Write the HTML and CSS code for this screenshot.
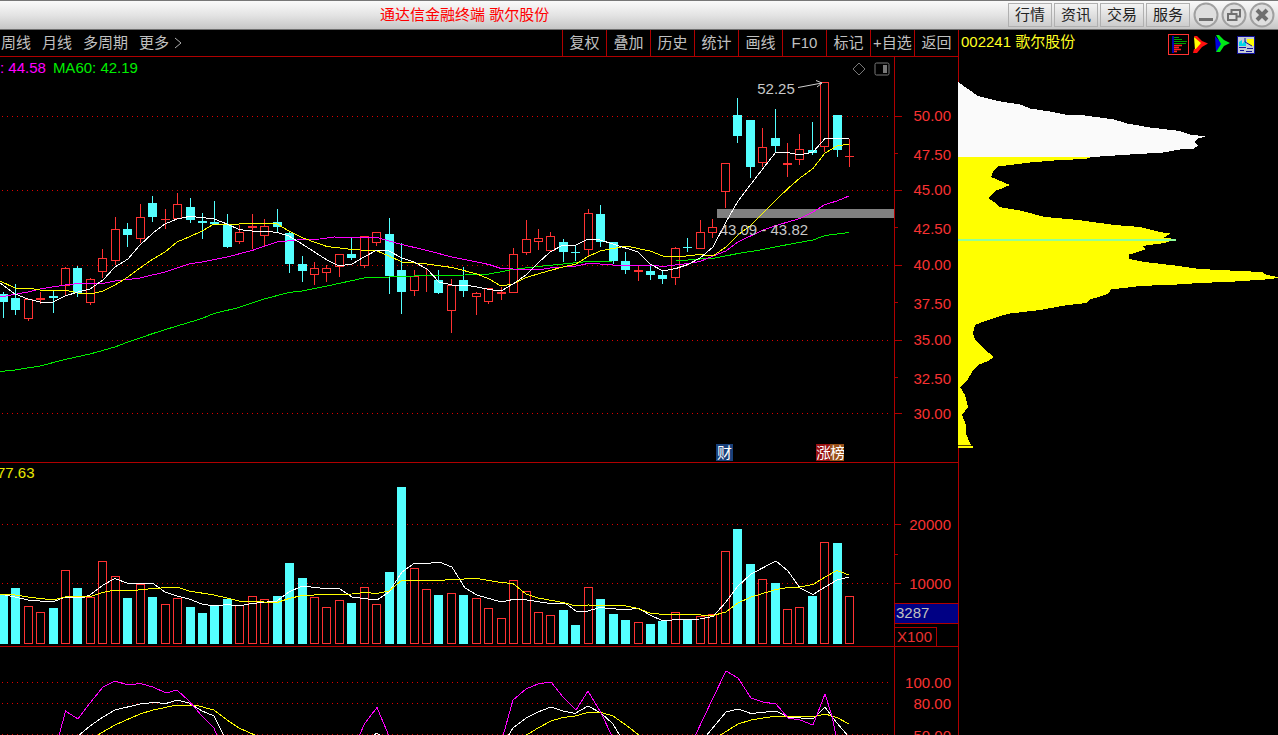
FILE: index.html
```html
<!DOCTYPE html>
<html lang="zh-CN">
<head>
<meta charset="utf-8">
<title>通达信金融终端 歌尔股份</title>
<link rel="stylesheet" href="styles.css">
</head>
<body>
<div class="app">
  <header class="titlebar">
    <h1 class="title">通达信金融终端 歌尔股份</h1>
    <nav class="title-menu">
      <button class="menu-btn" type="button">行情</button>
      <button class="menu-btn" type="button">资讯</button>
      <button class="menu-btn" type="button">交易</button>
      <button class="menu-btn" type="button">服务</button>
    </nav>
    <div class="window-controls">
      <button class="win-btn" type="button" aria-label="最小化"><svg viewBox="0 0 26 26"><circle cx="13" cy="13" r="11.5"/><path class="thick" d="M6 17.500H20"/></svg></button>
      <button class="win-btn" type="button" aria-label="还原"><svg viewBox="0 0 26 26"><circle cx="13" cy="13" r="11.5"/><path class="mid" d="M10.500 12V8H19V14.500H15.500M7 12H15.500V18H7Z"/></svg></button>
      <button class="win-btn" type="button" aria-label="关闭"><svg viewBox="0 0 26 26"><circle cx="13" cy="13" r="11.5"/><path class="cross" d="M8 8L18 18M18 8L8 18"/></svg></button>
    </div>
  </header>

  <main class="workspace">
    <section class="left">
      <div class="toolbar">
        <div class="periods">
          <button type="button">周线</button>
          <button type="button">月线</button>
          <button type="button">多周期</button>
          <button type="button" class="more">更多<svg viewBox="0 0 8 12"><path d="M1 1L7 6L1 11"/></svg></button>
        </div>
        <div class="tools">
          <button type="button">复权</button>
          <button type="button">叠加</button>
          <button type="button">历史</button>
          <button type="button">统计</button>
          <button type="button">画线</button>
          <button type="button">F10</button>
          <button type="button">标记</button>
          <button type="button">+自选</button>
          <button type="button">返回</button>
        </div>
      </div>

      <div class="panes">
        <div class="pane">
          <div class="plot">
            <svg id="price" class="canvas" viewBox="0 57 894 405" preserveAspectRatio="none"></svg>
            <p class="legend"><span class="ma20">: 44.58</span><span class="ma60">MA60: 42.19</span></p>
            <div class="plot-icons">
              <svg class="diamond" viewBox="0 0 14 14"><path d="M7 1L13 7L7 13L1 7Z"/></svg>
              <svg class="side" viewBox="0 0 16 14"><rect x="1" y="1" width="14" height="12" rx="1.500"/><path class="fill" d="M9 3H13V11H9Z"/></svg>
            </div>
            <svg id="notes" class="canvas"></svg>
            <div class="badge badge-fin">财</div>
            <div class="badge-pair"><span class="badge-up">涨</span><span class="badge-rank">榜</span></div>
          </div>
          <svg id="priceAxis" class="axis"></svg>
        </div>
        <div class="pane">
          <div class="plot">
            <svg id="volume" class="canvas" viewBox="0 463 894 183" preserveAspectRatio="none"></svg>
            <p class="legend clipped"><span class="vol">77.63</span></p>
          </div>
          <div class="axis-cell">
            <svg id="volumeAxis" class="axis"></svg>
            <div class="axis-foot">
              <div class="current">3287</div>
              <div class="unit">X100</div>
            </div>
          </div>
        </div>
        <div class="pane last">
          <div class="plot">
            <svg id="kdj" class="canvas" viewBox="0 647 894 88" preserveAspectRatio="none"></svg>
          </div>
          <svg id="kdjAxis" class="axis"></svg>
        </div>
      </div>
    </section>

    <aside class="right">
      <div class="stock-head">
        <h2 class="stock">002241 歌尔股份</h2>
        <div class="stock-icons">
          <button type="button" aria-label="筹码分布"><svg width="21" height="21" viewBox="0 0 21 21"><rect x=".5" y=".5" width="20" height="20" fill="none" stroke="#ff3232"/><path d="M5 2V19" stroke="#0000b0" stroke-width="2"/><path d="M6 3.500H11M6 5.500H14M6 7.500H19M6 9.500H18" stroke="#00a000"/><path d="M6 11.500H14M6 13.500H11M6 15.500H13M6 17.500H9" stroke="#ff2020" stroke-width="1.500"/></svg></button>
          <button type="button" aria-label="火焰山"><svg width="15" height="19" viewBox="0 0 15 19"><path d="M1 1L4 1L9 6L15 8.500L9 12L4 18H1L5 9Z" fill="#ff1010"/><path d="M1 2L8 8L2 15Z" fill="#ffff00"/><path d="M1 14L6 14L2 18H0Z" fill="#ff1010"/></svg></button>
          <button type="button" aria-label="活跃度"><svg width="15" height="19" viewBox="0 0 15 19"><path d="M0 1L7 9L1 17Z" fill="#0000e0"/><path d="M1 0H4L9 5L15 8L9 11L5 17H1L6 9Z" fill="#00e818"/></svg></button>
          <button type="button" aria-label="成本信息"><svg width="18" height="18" viewBox="0 0 18 18"><path d="M0 0H18V18H0Z" fill="#10109a"/><path d="M1 1H17V17H1Z" fill="#c4ccd4"/><path d="M10 3H17V10H14L10 6Z" fill="#ffff00"/><path d="M2 10V6L5 4V8L9 4V10Z" fill="#00d8e8"/><path d="M8 2V6L15 10" stroke="#10109a" fill="none"/><path d="M2 11.500H9M3 14.500H7M10 12.500H16M9 15.500H15" stroke="#10109a"/></svg></button>
        </div>
      </div>
      <svg id="chips" class="chips" viewBox="958 57 320 678" preserveAspectRatio="none"></svg>
    </aside>
  </main>
</div>
<script src="charts.js"></script>
</body>
</html>
```

FILE: styles.css
```css
* { box-sizing: border-box; }

body {
  margin: 0;
  background: #000;
  color: #c0c0c0;
  font: 15px/20px "Liberation Sans", "Noto Sans CJK SC", sans-serif;
}

h1, h2, p { margin: 0; font-size: 15px; font-weight: 400; }
svg { display: block; }

button {
  margin: 0;
  padding: 0;
  border: 0;
  background: none;
  color: inherit;
  font: inherit;
  white-space: nowrap;
}

.app {
  display: flex;
  flex-direction: column;
  height: 100vh;
  overflow: hidden;
}

.titlebar {
  display: flex;
  align-items: center;
  flex: none;
  height: 30px;
  padding-right: 3px;
  border-top: 1px solid #777;
  border-bottom: 1px solid #707070;
  background: linear-gradient(#fafafa, #e4e4e4 50%, #c6c6c6);
}

.title { flex: 1; padding-left: 380px; color: #f00; white-space: nowrap; }
.title-menu { display: flex; gap: 2px; }

.menu-btn {
  width: 44px;
  height: 24px;
  border: 1px solid #b0b0b0;
  background: linear-gradient(#f4f4f4, #e0e0e0 50%, #cdcdcd);
  color: #222;
}

.window-controls { display: flex; gap: 2px; margin-left: 3px; }
.win-btn svg { width: 26px; height: 26px; fill: none; stroke: #a0a0a0; stroke-width: 2; }
.win-btn circle { fill: #dedede; }
.win-btn path { stroke: #707070; }
.win-btn .thick { stroke-width: 3; }
.win-btn .cross { stroke-width: 4; }

.workspace {
  display: grid;
  grid-template-columns: minmax(0, 1fr) 320px;
  flex: 1;
  min-height: 0;
}

.left { display: flex; flex-direction: column; min-width: 0; min-height: 0; }

.toolbar {
  display: flex;
  justify-content: space-between;
  flex: none;
  height: 27px;
  border-bottom: 1px solid #b00000;
}

.periods { display: flex; gap: 11px; padding-left: 1px; }
.more { display: flex; align-items: center; gap: 5px; }
.more svg { width: 8px; height: 12px; fill: none; stroke: #b0b0b0; }
.tools { display: flex; }
.tools button { width: 44px; border-left: 1px solid #b00000; }

.panes {
  display: grid;
  grid-template-rows: 406fr 184fr 88fr;
  flex: 1;
  min-height: 0;
}

.pane {
  display: grid;
  grid-template-columns: minmax(0, 1fr) 64px;
  grid-template-rows: minmax(0, 1fr);
  min-height: 0;
  border-bottom: 1px solid #b00000;
}

.pane.last { border-bottom: 0; }
.plot { position: relative; overflow: hidden; }
.canvas { position: absolute; inset: 0; width: 100%; height: 100%; }
.axis { width: 100%; height: 100%; border-left: 1px solid #b00000; overflow: hidden; }

.legend { position: absolute; top: 1px; left: 0; display: flex; gap: 7px; }
.legend.clipped { text-indent: -3px; top: 0; }
.ma20 { color: #f0f; }
.ma60 { color: #0e0; }
.vol { color: #e8e800; }

.plot-icons {
  position: absolute;
  top: 5px;
  right: 4px;
  display: flex;
  gap: 8px;
}

.plot-icons svg { height: 14px; fill: none; stroke: #787878; }
.diamond { width: 14px; }
.side { width: 16px; }
.plot-icons .fill { fill: #787878; stroke: none; }

.badge, .badge-pair {
  position: absolute;
  bottom: 1px;
  height: 17px;
  line-height: 17px;
  color: #fff;
}

.badge-fin { left: 80.1%; width: 17px; text-align: center; background: #18407a; }
.badge-pair { left: 91.3%; display: flex; }
.badge-pair span { width: 14px; overflow: hidden; }
.badge-up { background: #981010; }
.badge-rank { background: #985018; }

.axis-cell { position: relative; min-height: 0; }

.axis-foot {
  position: absolute;
  right: 0;
  bottom: 0;
  left: 0;
  display: flex;
  flex-direction: column;
  align-items: flex-start;
  gap: 3px;
}

.current {
  align-self: stretch;
  height: 21px;
  padding-left: 1px;
  border: solid #b00000;
  border-width: 1px 0 1px 1px;
  background: #000084;
  line-height: 18px;
}

.unit {
  width: 43px;
  height: 19px;
  padding-left: 2px;
  border: 1px solid #b00000;
  border-bottom: 0;
  color: #e83030;
  line-height: 18px;
}

.right {
  display: flex;
  flex-direction: column;
  min-width: 0;
  min-height: 0;
  border-left: 1px solid #b00000;
}

.stock-head {
  display: flex;
  justify-content: space-between;
  flex: none;
  height: 27px;
  padding: 2px 23px 0 2px;
}

.stock { color: #ffff20; }
.stock-icons { display: flex; align-items: center; gap: 7px; }
.stock-icons button:first-child { margin-right: -3px; }
.chips { flex: 1; min-height: 0; margin-left: -1px; }

svg text { font: 15px "Liberation Sans", "Noto Sans CJK SC", sans-serif; }
.crisp, .line, .grid, .tick { shape-rendering: crispEdges; }
.line { fill: none; stroke-width: 1; vector-effect: non-scaling-stroke; }
.grid { stroke: #e00000; stroke-dasharray: 1 4; vector-effect: non-scaling-stroke; }
.tick { stroke: #b00000; }
.scale { fill: #f83232; text-anchor: end; }
.up { fill: #000; stroke: #ff3232; }
.up-wick { stroke: #ff3232; }
.flat { fill: #ff3232; }
.down { fill: #54ffff; stroke: none; }
.down-wick { stroke: #54ffff; }
.note { fill: #c8c8c8; }
.arrow { fill: none; stroke: #d0d0d0; }
.white { stroke: #fff; }
.yellow { stroke: #ff0; }
.magenta { stroke: #f0f; }
.green { stroke: #00f000; }
```

FILE: charts.js
```js
const NS = 'http://www.w3.org/2000/svg';

function add(parent, tag, attrs, text) {
  const node = document.createElementNS(NS, tag);
  for (const key in attrs) node.setAttribute(key, attrs[key]);
  if (text) node.textContent = text;
  parent.appendChild(node);
  return node;
}

const byId = id => document.getElementById(id);
const centre = i => Math.floor(3.3 + 12.447 * i) + 0.5;

function grid(svg, rows) {
  rows.forEach(y => add(svg, 'line', { class: 'grid', x1: 2, x2: 890, y1: y + 0.5, y2: y + 0.5 }));
}

function lines(svg, colour, ...sets) {
  sets.forEach(points => add(svg, 'polyline', { class: 'line ' + colour, points }));
}

/* kind, high, body top, body bottom, low; r = rising, d = falling, f = nearly flat, drawn solid */
const candles = [
  ['d',292,294,302,318],['d',284,298,310,315],['r',299,299,318,321],['f',292,298,300,304],['d',291,296,298,313],
  ['r',267,268,285,296],['d',266,268,293,297],['r',278,279,302,305],['r',249,258,271,278],['r',217,229,260,265],
  ['d',223,229,235,247],['r',204,217,238,243],['d',196,203,217,222],['f',209,219,220,229],['r',193,204,218,218],
  ['d',198,207,220,223],['d',213,221,223,239],['d',201,222,224,224],['d',214,224,247,248],['r',225,232,241,244],
  ['f',214,226,228,249],['r',219,226,235,246],['d',209,222,227,233],['d',232,233,264,273],['d',256,264,271,282],
  ['r',262,268,274,285],['r',265,268,272,282],['r',254,254,266,277],['d',238,254,258,260],['r',236,236,265,268],
  ['r',232,232,242,246],['d',218,234,276,294],['d',243,270,292,314],['r',270,276,290,296],['f',269,275,276,292],
  ['d',270,280,293,294],['r',279,285,310,333],['d',267,280,291,297],['r',292,293,296,315],['r',288,288,301,304],
  ['f',287,292,294,300],['r',248,254,292,292],['r',220,239,252,255],['r',229,238,241,250],['r',232,236,250,252],
  ['d',239,242,252,262],['d',245,252,253,261],['r',209,213,249,256],['d',205,214,242,247],['d',242,242,261,264],
  ['d',252,261,270,274],['f',265,270,272,281],['d',265,271,275,280],['d',271,275,279,284],['r',247,248,277,285],
  ['d',238,247,248,252],['r',220,232,248,248],['r',219,227,232,238],['r',163,163,191,208],['d',98,115,136,143],
  ['d',120,120,167,178],['r',128,147,162,167],['d',109,138,146,152],['f',143,163,165,177],['r',134,149,159,165],
  ['d',122,150,153,155],['r',82,82,146,152],['d',115,115,150,157],['f',139,156,157,167]
];

const volumes = [
  594,588,606,612,608,570,588,597,561,576,598,584,597,604,598,607,613,606,599,605,596,599,596,563,578,
  597,607,600,603,587,604,572,487,568,589,595,593,595,598,608,618,580,591,612,615,610,625,587,599,614,
  620,622,624,621,612,620,616,614,551,529,564,579,583,609,607,596,542,543,596
];

const fallingVolume = new Set([0,1,4,6,10,12,15,16,17,18,22,23,24,28,31,32,35,37,45,46,48,49,50,52,53,55,59,60,62,65,67]);

const price = byId('price');
grid(price, [116, 190, 265, 340, 413]);
add(price, 'rect', { x: 717, y: 209, width: 177, height: 9, fill: '#808080', class: 'crisp' });
candles.forEach(([kind, high, top, bottom, low], i) => {
  const x = centre(i);
  const wick = kind === 'd' ? 'down-wick crisp' : 'up-wick crisp';
  add(price, 'line', { class: wick, x1: x, x2: x, y1: high, y2: low });
  if (kind === 'r') {
    add(price, 'rect', { class: 'up crisp', x: x - 4, y: top + 0.5, width: 8, height: bottom - top });
  } else {
    const body = kind === 'd' ? 'down crisp' : 'flat crisp';
    add(price, 'rect', { class: body, x: x - 4.5, y: top, width: 9, height: bottom - top });
  }
});
lines(price, 'green', '0,371.5 15,370 40,366 65,359.5 90,354 115,347 128,342 153,333.5 177,326 202,318.5 214,313.5 239,307.5 264,299 289,292.5 302,291 327,286 364,278 402,276.5 427,275.5 465,275 489,274 513,269.5 538,266.5 563,264 588,261.5 613,261 676,261 700,259 713,258.5 738,253.5 763,249.5 788,244.5 813,240 825,235.5 849,232.5');
lines(price, 'magenta', '0,297 28,292 40,289 65,285 78,283.5 103,283.5 115,281 140,278 165,272 189,264 202,262 227,257 252,250.5 277,242 302,239.5 320,239 334,237 377,237.5 389,241 402,244.5 427,250.5 452,257 489,264.5 501,268.5 538,270 550,268 576,266 588,263.5 600,264 626,266 650,265 663,266.5 688,263.5 700,261.5 713,256 726,251 738,242 763,230 776,225.5 800,218.5 813,212 825,204.5 837,201 849,196');
lines(price, 'yellow', '0,281 15,288 28,288 40,290 53,291 65,290 78,293 95,293 103,291 115,285 128,277 140,268 153,259 165,252 177,242 189,237 202,231 214,224 239,224 252,223 277,224 289,231 302,237.5 314,242 327,246.5 352,249.5 377,251 389,256 402,262 427,264 452,267.5 477,274 489,279 501,286 513,284 526,277.5 550,270.5 563,267 576,264 588,256.5 600,251 626,246 650,251 663,256 676,257 700,254.5 713,256 726,247 738,235 751,225 763,213 776,200 788,188.5 800,178 813,168.5 825,153 837,146 849,144');
lines(price, 'white', '0,283 15,294 28,299 40,302 53,302 65,296 78,292 90,289 103,280 115,267 128,259 140,245 153,233 165,224 177,219 189,216.5 202,217.5 214,219 227,224 239,229.5 252,231 264,231 277,232.5 289,236 302,244 327,260 339,266 352,264 364,257 377,250 389,251 402,258 414,262 427,269 439,282 452,285 465,285 477,287 489,289.5 501,291 513,284 526,275 538,263 550,252 563,245 576,245 588,239 600,240 613,244 638,252 650,264 663,271 676,268.5 688,264.5 700,258 713,247 726,222 738,201 751,184 763,168.5 776,152 788,152.5 800,155 813,152 825,138.5 837,139 849,138.5');
add(price, 'path', { class: 'arrow', d: 'M798 87.500L822 83M816 80.500L822 83L817 87' });

const volume = byId('volume');
grid(volume, [524, 583]);
volumes.forEach((top, i) => {
  const x = centre(i);
  if (fallingVolume.has(i)) add(volume, 'rect', { class: 'down crisp', x: x - 4.5, y: top, width: 9, height: 644 - top });
  else add(volume, 'rect', { class: 'up crisp', x: x - 4, y: top + 0.5, width: 8, height: 643 - top });
});
lines(volume, 'white', '0,594 15,597 28,600 40,601 53,602 65,597 85,597 90,595 103,585 115,578.5 128,583.5 153,583.5 165,592 177,596 189,599 202,604 214,606 227,604.5 239,606 252,603.5 277,601 289,592 302,586 320,588 340,589 352,597 364,598.5 377,600 389,592 402,572 414,563.5 427,563.5 439,562 452,567 465,588 477,595 501,602 513,599.5 527,600 550,603.5 565,603 576,611 588,611 600,607.5 626,610 638,608 650,615 663,621 676,619.5 700,619 713,616.5 726,602 738,586 751,574 776,561 788,571 800,588 813,594.5 825,587 837,580 849,577');
lines(volume, 'yellow', '0,594 15,595 28,597 53,600 65,597 90,596.5 103,592.5 115,590 128,591 153,588.5 177,587 189,591 214,595 227,598 239,601 264,602 277,602.5 289,598.5 302,595.5 327,594.5 352,594 364,592.5 377,593.5 389,591 402,580 420,580 430,581 452,579.5 477,578.5 501,582.5 513,583.5 526,594 538,598 563,602.5 576,606 588,605 626,606 638,608.5 650,613 663,614.5 688,614.5 713,615.5 726,612 738,603 751,597 776,589.5 788,587.5 800,587 813,584.5 825,577 837,570.5 849,575');

const kdj = byId('kdj');
grid(kdj, [682, 703, 734]);
lines(kdj, 'white',
  '78,736 90,726 103,717 115,710 140,704 153,702.5 166,703.5 177,700 189,703 202,711 214,716 220,728 224,736',
  '373,736 377,733 381,736',
  '508,736 513,728 526,718 538,712 551,707 563,711 575,713.5 588,706 601,713 613,724 620,736',
  '706,736 726,712 738,709 751,713.5 776,711 788,717 813,719 825,707 837,723 848,736');
lines(kdj, 'yellow',
  '96,736 115,725 140,714 153,710 177,705 195,705 214,710 227,720 239,728 257,736',
  '525,736 538,728 551,721 563,717.5 575,716 588,712.5 601,712.5 613,716 626,725 640,736',
  '719,736 738,724 751,720 776,716 800,716 813,717 825,714 837,717.5 849,724');
lines(kdj, 'magenta',
  '59,736 65.5,711 78,719 90,703 103,687 115,681 128,685 140,683.5 153,687 166,693 177,690 189,701 202,716 214,728 217,736',
  '359,736 365,723 377,707.5 389,736',
  '503,736 513,700 526,689 538,684 551,682 563,697 576,710 588,691 601,713 612,736',
  '695,736 713,698 726,671 738,678 751,698 763,702 776,704 788,718 800,720 813,725 825,694 832,716 836,736');

/* Labels and ticks use percentages, so the text keeps its shape at any pane height. */
function axis(id, top, height, labels, ticks) {
  const svg = byId(id);
  const pct = y => ((y - top) / height * 100).toFixed(2) + '%';
  labels.forEach(([text, y]) => add(svg, 'text', { class: 'scale', x: 56, y: pct(y), dy: 5 }, text));
  ticks.forEach(([y, size]) => add(svg, 'line', { class: 'tick', x1: 0, x2: size, y1: pct(y + 0.5), y2: pct(y + 0.5) }));
}

axis('priceAxis', 57, 405,
  [['50.00', 116.5], ['47.50', 155.5], ['45.00', 190.5], ['42.50', 229], ['40.00', 265], ['37.50', 304], ['35.00', 340], ['32.50', 379], ['30.00', 414]],
  [[116, 7], [153, 3], [190, 7], [227, 3], [265, 7], [302, 3], [340, 7], [377, 3], [413, 7]]);
axis('volumeAxis', 463, 183, [['20000', 525.5], ['10000', 584]], [[524, 6], [554, 3], [583, 6]]);
axis('kdjAxis', 647, 88, [['100.00', 683], ['80.00', 704], ['50.00', 736]], []);

const notes = byId('notes');
add(notes, 'text', { class: 'note', x: '84.7%', y: '9.1%' }, '52.25');
add(notes, 'text', { class: 'note', x: '80.5%', y: '44%' }, '43.09 - 43.82');

const chips = byId('chips');
add(chips, 'polygon', { class: 'crisp', fill: '#fafafa', points: '958,82 968,89 978,96 998,101 1020,104.5 1030,108.5 1050,111.5 1068,115 1085,115.5 1114,119.5 1127,123.5 1150,127.5 1180,131 1190,134.5 1205,136.5 1198,138.5 1194,142 1198,146 1193,149 1180,149.5 1163,152.5 1130,154.5 1092,157 958,157' });
add(chips, 'polygon', { class: 'crisp', fill: '#ffff00', points: '958,157 1092,157 1085,159 1060,160 1030,162.5 1010,165 998,166.5 994,170 991,177 1010,185 1003,188 995,191 988,198 997,204 999,207 1020,210.5 1045,217 1078,220 1115,225 1140,227 1160,232 1170,233.5 1164,237.5 1175,239 1165,243 1142,246 1146,249 1138,252 1129,254.5 1129,259 1145,262 1175,265.5 1200,269 1240,271 1262,272 1267,275 1278,277 1278,278 1265,279.5 1235,281.5 1200,283 1177,284.5 1140,286 1111,289.5 1108,294 1090,299.5 1086,303 1065,305.5 1040,310 1010,313.5 1000,316 985,321 975,325 973,333 975,340 983,348 994,357 988,361 978,365 972,372 967,381 960,387 965,395 968,407 962,415 966,425 966,434 971,445 958,445' });
add(chips, 'rect', { class: 'crisp', x: 958, y: 239, width: 218, height: 2, fill: '#90ff98' });
add(chips, 'rect', { class: 'crisp', x: 958, y: 445, width: 13, height: 1, fill: '#504000' });
add(chips, 'rect', { class: 'crisp', x: 958, y: 446, width: 15, height: 2, fill: '#ffff00' });
```
